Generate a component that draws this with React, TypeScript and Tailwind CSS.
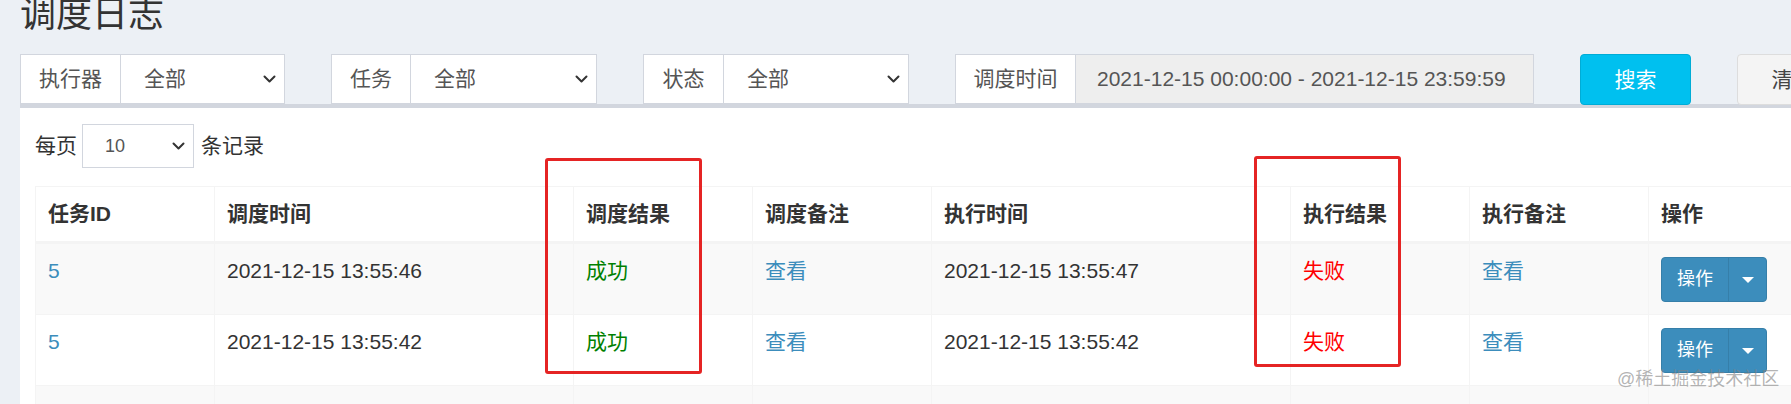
import { ReactNode } from 'react';

const FONT = "font-['Liberation_Sans','Noto_Sans_CJK_SC',sans-serif]";

function Chevron({ className = '' }: { className?: string }) {
  return (
    <svg width="13" height="8" viewBox="0 0 13 8" className={className}>
      <path d="M1.5 1.5 L6.5 6.5 L11.5 1.5" fill="none" stroke="#333" strokeWidth="2" strokeLinecap="round" strokeLinejoin="round" />
    </svg>
  );
}

function FilterSelect({ label, labelW, width }: { label: string; labelW: string; width: string }) {
  return (
    <div className={`flex h-full shrink-0 ${width}`}>
      <div className={`flex items-center justify-center border border-[#d2d6de] bg-white text-[#555] ${labelW}`}>
        {label}
      </div>
      <div className="flex flex-1 items-center justify-between border border-l-0 border-[#d2d6de] bg-white pl-[23px] pr-[8px] text-[#555]">
        <span>全部</span>
        <Chevron />
      </div>
    </div>
  );
}

function OpButton() {
  return (
    <div className="inline-flex h-[45px] overflow-hidden rounded-[4px] border border-[#367fa9] bg-[#3c8dbc] text-[18px] text-white">
      <div className="flex w-[66px] items-center justify-center">操作</div>
      <div className="flex w-[38px] items-center justify-center border-l border-[#367fa9]">
        <span className="h-0 w-0 border-x-[6px] border-t-[6px] border-x-transparent border-t-white" />
      </div>
    </div>
  );
}

type Row = { id: string; time: string; runTime: string };

const ROWS: Row[] = [
  { id: '5', time: '2021-12-15 13:55:46', runTime: '2021-12-15 13:55:47' },
  { id: '5', time: '2021-12-15 13:55:42', runTime: '2021-12-15 13:55:42' },
];

const COLS = ['任务ID', '调度时间', '调度结果', '调度备注', '执行时间', '执行结果', '执行备注', '操作'];
const WIDTHS = ['w-[179px]', 'w-[359px]', 'w-[179px]', 'w-[179px]', 'w-[359px]', 'w-[179px]', 'w-[179px]', 'w-[179px]'];

function Cell({ children }: { children?: ReactNode }) {
  return <td className="border border-[#f4f4f4] px-[12px] pt-[12px] pb-[12px] align-top leading-[30px]">{children}</td>;
}

export default function App() {
  return (
    <div className={`relative h-[404px] w-[1791px] overflow-hidden bg-[#ecf0f5] text-[21px] text-[#333] ${FONT}`}>
      <div className="-mt-[3px] h-[36px] pl-[20px] text-[36px] leading-[36px] text-[#333]">调度日志</div>

      <div className="mt-[21px] flex h-[50px] gap-[46px] pl-[20px]">
        <FilterSelect label="执行器" labelW="w-[101px]" width="w-[265px]" />
        <FilterSelect label="任务" labelW="w-[80px]" width="w-[266px]" />
        <FilterSelect label="状态" labelW="w-[81px]" width="w-[266px]" />
        <div className="flex h-full w-[579px] shrink-0">
          <div className="flex w-[121px] items-center justify-center border border-[#d2d6de] bg-white text-[#555]">调度时间</div>
          <div className="flex flex-1 items-center border border-l-0 border-[#d2d6de] bg-[#eeeeee] pl-[21px] text-[#555]">
            2021-12-15 00:00:00 - 2021-12-15 23:59:59
          </div>
        </div>
        <div className="flex h-[51px] w-[111px] shrink-0 items-center justify-center rounded-[4px] border border-[#00acd6] bg-[#00c0ef] text-white">
          搜索
        </div>
        <div className="flex h-[51px] w-[111px] shrink-0 items-center justify-center rounded-[4px] border border-[#dddddd] bg-[#f4f4f4] text-[#444]">
          清空
        </div>
      </div>

      <div className="ml-[20px] border-t-[4px] border-[#d2d6de] bg-white pl-[15px] pt-[16px]">
        <div className="flex h-[44px] items-center text-[#333]">
          <span>每页</span>
          <div className="ml-[5px] mr-[7px] flex h-[44px] w-[112px] items-center justify-between border border-[#d2d6de] pl-[22px] pr-[8px] text-[18px] text-[#555]">
            <span>10</span>
            <Chevron />
          </div>
          <span>条记录</span>
        </div>

        <table className="mt-[18px] w-[1792px] table-fixed border-collapse border border-[#f4f4f4]">
          <colgroup>
            {WIDTHS.map((w, i) => (
              <col key={i} className={w} />
            ))}
          </colgroup>
          <thead>
            <tr>
              {COLS.map(c => (
                <th key={c} className="border border-b-[3px] border-[#f4f4f4] px-[12px] py-[12px] text-left font-bold leading-[30px]">
                  {c}
                </th>
              ))}
            </tr>
          </thead>
          <tbody>
            {ROWS.map((r, i) => (
              <tr key={i} className={i % 2 === 0 ? 'bg-[#f9f9f9]' : 'bg-white'}>
                <Cell><span className="text-[#3c8dbc]">{r.id}</span></Cell>
                <Cell>{r.time}</Cell>
                <Cell><span className="text-[#008000]">成功</span></Cell>
                <Cell><span className="text-[#3c8dbc]">查看</span></Cell>
                <Cell>{r.runTime}</Cell>
                <Cell><span className="text-[#ff0000]">失败</span></Cell>
                <Cell><span className="text-[#3c8dbc]">查看</span></Cell>
                <td className="border border-[#f4f4f4] px-[12px] py-[12px] align-top">
                  <div className="pt-[1px]"><OpButton /></div>
                </td>
              </tr>
            ))}
            <tr className="bg-[#f9f9f9]">
              {COLS.map((c, i) => (
                <td key={i} className="h-[70px] border border-[#f4f4f4]" />
              ))}
            </tr>
          </tbody>
        </table>
      </div>

      <div className="absolute left-[545px] top-[158px] h-[216px] w-[157px] rounded-[3px] border-[3px] border-[#e52424]" />
      <div className="absolute left-[1254px] top-[156px] h-[211px] w-[147px] rounded-[3px] border-[3px] border-[#e52424]" />

      <div className="absolute left-[1617px] top-[368px] text-[18px] leading-[22px] text-[rgba(130,130,130,0.6)]">@稀土掘金技术社区</div>
    </div>
  );
}
